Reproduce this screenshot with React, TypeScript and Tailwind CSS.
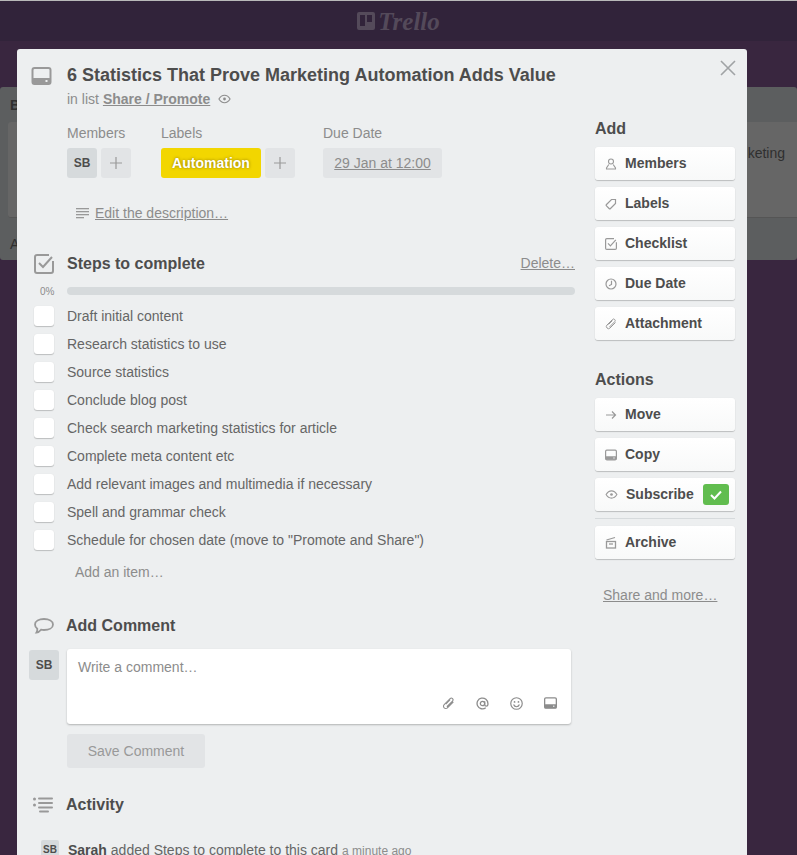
import React from 'react'

const ITEMS = [
  'Draft initial content',
  'Research statistics to use',
  'Source statistics',
  'Conclude blog post',
  'Check search marketing statistics for article',
  'Complete meta content etc',
  'Add relevant images and multimedia if necessary',
  'Spell and grammar check',
  'Schedule for chosen date (move to "Promote and Share")',
]

type IconProps = { className?: string }

const CardIcon = ({ className }: IconProps) => (
  <svg viewBox="0 0 20 18" className={className} fill="none">
    <rect x="1" y="1" width="18" height="16" rx="2" stroke="currentColor" strokeWidth="2" />
    <rect x="1" y="11" width="18" height="6" rx="1" fill="currentColor" />
    <rect x="14" y="13" width="2" height="2" fill="#edeff0" />
  </svg>
)

const EyeIcon = ({ className }: IconProps) => (
  <svg viewBox="0 0 14 10" className={className} fill="none" stroke="currentColor">
    <path d="M1 5c1.500-2.500 3.500-4 6-4s4.500 1.500 6 4c-1.500 2.500-3.500 4-6 4s-4.500-1.500-6-4z" strokeWidth="1.200" />
    <circle cx="7" cy="5" r="1.500" fill="currentColor" stroke="none" />
  </svg>
)

const CheckboxIcon = ({ className }: IconProps) => (
  <svg viewBox="0 0 20 20" className={className} fill="none" stroke="currentColor">
    <path d="M15 1H3a2 2 0 0 0-2 2v14a2 2 0 0 0 2 2h14a2 2 0 0 0 2-2V7" strokeWidth="2" />
    <path d="M5 9l4 4 9-10" strokeWidth="2" />
  </svg>
)

const PersonIcon = ({ className }: IconProps) => (
  <svg viewBox="0 0 12 12" className={className} fill="none" stroke="currentColor" strokeWidth="1.100">
    <circle cx="6" cy="3.500" r="2.500" />
    <path d="M3.800 6.500 1.500 10v1h9v-1L8.200 6.500" />
  </svg>
)

const TagIcon = ({ className }: IconProps) => (
  <svg viewBox="0 0 12 12" className={className} fill="none" stroke="currentColor" strokeWidth="1.200">
    <path d="M6.500 1.500h4v4L5.500 10.500a1 1 0 0 1-1.400 0L1.500 7.900a1 1 0 0 1 0-1.400z" />
  </svg>
)

const ClockIcon = ({ className }: IconProps) => (
  <svg viewBox="0 0 12 12" className={className} fill="none" stroke="currentColor" strokeWidth="1.200">
    <circle cx="6" cy="6" r="5" />
    <path d="M6.500 2.800V6.500L4 7.800" />
  </svg>
)

const ClipIcon = ({ className }: IconProps) => (
  <svg viewBox="0 0 12 12" className={className} fill="none" stroke="currentColor" strokeWidth="1">
    <path d="M10.500 4.500 5 10a2 2 0 0 1-3-3l5.500-5.500a1.500 1.500 0 0 1 2.200 2.200L4.500 9" />
    <path d="M3.500 6.500 7.500 2.500" />
  </svg>
)

const ArrowIcon = ({ className }: IconProps) => (
  <svg viewBox="0 0 12 12" className={className} fill="none" stroke="currentColor" strokeWidth="1.200">
    <path d="M1 6h9.500M7 2.500 10.500 6 7 9.500" />
  </svg>
)

const ArchiveIcon = ({ className }: IconProps) => (
  <svg viewBox="0 0 12 13" className={className} fill="none" stroke="currentColor">
    <path d="M1.500 4 10 1.500" strokeWidth="1.200" />
    <rect x="1.500" y="5.500" width="9" height="6.500" strokeWidth="1.300" />
    <path d="M4 8h4" strokeWidth="1.300" />
  </svg>
)

const LinesIcon = ({ className }: IconProps) => (
  <svg viewBox="0 0 13 11" className={className} fill="currentColor">
    <rect x="0" y="0" width="13" height="1.300" />
    <rect x="0" y="3" width="13" height="1.300" />
    <rect x="0" y="6" width="13" height="1.300" />
    <rect x="0" y="9" width="8" height="1.300" />
  </svg>
)

const BubbleIcon = ({ className }: IconProps) => (
  <svg viewBox="0 0 20 16" className={className} fill="none" stroke="currentColor" strokeWidth="1.800">
    <path d="M10 1c5 0 9 2 9 5.500S15 12 10 12c-1 0-2-.100-3-.300C6 13 4.500 14.500 2.500 14.500c.700-1 .900-2.300.800-3.700C2 9.800 1 8.300 1 6.500 1 3 5 1 10 1z" />
  </svg>
)

const ListIcon = ({ className }: IconProps) => (
  <svg viewBox="0 0 20 16" className={className} fill="currentColor">
    <circle cx="1.500" cy="2" r="1.500" />
    <circle cx="1.500" cy="8" r="1.500" />
    <rect x="5" y="0.500" width="15" height="2" rx="1" />
    <rect x="5" y="5" width="15" height="2" rx="1" />
    <rect x="5" y="9.500" width="15" height="2" rx="1" />
    <rect x="6" y="13.500" width="10" height="2" rx="1" />
  </svg>
)

const AtIcon = ({ className }: IconProps) => (
  <svg viewBox="0 0 12 12" className={className} fill="none" stroke="currentColor" strokeWidth="1.200">
    <circle cx="6" cy="6" r="2" />
    <path d="M8 4v3a1.500 1.500 0 0 0 3 0V6a5 5 0 1 0-2 4" />
  </svg>
)

const SmileIcon = ({ className }: IconProps) => (
  <svg viewBox="0 0 12 12" className={className} fill="none" stroke="currentColor" strokeWidth="1.100">
    <circle cx="6" cy="6" r="5.300" />
    <circle cx="4.200" cy="4.500" r=".8" fill="currentColor" stroke="none" />
    <circle cx="7.800" cy="4.500" r=".8" fill="currentColor" stroke="none" />
    <path d="M3.300 7c.5 1.300 1.500 2 2.700 2s2.200-.7 2.700-2" />
  </svg>
)

const SideButton = ({ icon, label }: { icon: React.ReactNode; label: string }) => (
  <div className="flex h-[33px] items-center rounded-[3px] bg-gradient-to-b from-white to-[#f8f9f9] pl-[10px] text-[14px] font-bold text-[#4d4d4d] shadow-[0_1px_1px_rgba(0,0,0,0.2),0_0_1px_rgba(0,0,0,0.1)]">
    <span className="flex w-[20px] text-[#999999]">{icon}</span>
    {label}
  </div>
)

const Avatar = () => (
  <div className="flex h-[30px] w-[30px] items-center justify-center rounded-[3px] bg-[#d6dadc] pb-[1px] text-[12px] font-bold text-[#4d4d4d]">
    SB
  </div>
)

const Plus = () => (
  <div className="flex h-[30px] w-[30px] items-center justify-center rounded-[3px] bg-[#e2e4e6] text-[#999999]">
    <svg viewBox="0 0 12 12" className="h-[12px] w-[12px]" stroke="currentColor" strokeWidth="1.200">
      <path d="M6 0v12M0 6h12" />
    </svg>
  </div>
)

export default function App() {
  return (
    <div className="relative h-[855px] w-[797px] overflow-hidden bg-[#39263f] font-['Liberation_Sans',Arial,sans-serif] text-[14px] text-[#4d4d4d]">
      {/* Header and the dimmed board */}
      <div className="h-px bg-[#b9b9b9]" />
      <div className="flex h-[40px] items-center justify-center gap-[3px] bg-[#31233a] text-[#544a5a]">
        <svg viewBox="0 0 18 18" className="h-[18px] w-[18px]" fill="currentColor">
          <path d="M2 0h14a2 2 0 0 1 2 2v14a2 2 0 0 1-2 2H2a2 2 0 0 1-2-2V2a2 2 0 0 1 2-2zm1 3v11h5V3zm7 0v7h5V3z" fillRule="evenodd" />
        </svg>
        <span className="font-['Liberation_Serif',serif] text-[25px] font-bold italic leading-none">Trello</span>
      </div>
      <div className="mt-[46px] flex h-[173px] flex-col rounded-[3px] bg-[#5c5e5f] pt-[8px] text-[#2f2f2f]">
        <div className="h-[27px] pl-[10px] text-[14px] font-bold">B</div>
        <div className="mx-[8px] mr-0 flex h-[96px] justify-end rounded-l-[3px] border-b border-[#555] bg-[#666666] pr-[12px] pt-[21px]">
          <span className="text-[14px]">keting</span>
        </div>
        <div className="pl-[10px] pt-[16px]">A</div>
      </div>

      {/* Card modal */}
      <div className="absolute left-[17px] top-[49px] flex h-[830px] w-[730px] rounded-t-[3px] bg-[#edeff0]">
        <svg viewBox="0 0 16 16" className="absolute right-[11px] top-[11px] h-[16px] w-[16px] text-[#a0a3a5]" stroke="currentColor" strokeWidth="1.600" fill="none">
          <path d="M1 1l14 14M15 1 1 15" />
        </svg>

        {/* Main column */}
        <div className="flex w-[558px] flex-col pt-[16px]">
          <div className="flex">
            <div className="w-[50px] pl-[14px] pt-[2px] text-[#999999]">
              <CardIcon className="h-[18px] w-[21px]" />
            </div>
            <div>
              <h1 className="text-[18px] font-bold leading-[20px]">6 Statistics That Prove Marketing Automation Adds Value</h1>
              <div className="mt-[4px] flex items-center leading-[20px] text-[#8c8c8c]">
                in list
                <span className="ml-[4px] font-bold underline">Share / Promote</span>
                <EyeIcon className="ml-[8px] h-[10px] w-[13px]" />
              </div>
            </div>
          </div>

          <div className="ml-[50px] mt-[14px] flex text-[#8c8c8c]">
            <div className="w-[94px]">
              <div className="leading-[20px]">Members</div>
              <div className="mt-[5px] flex gap-[4px]">
                <Avatar />
                <Plus />
              </div>
            </div>
            <div className="w-[162px]">
              <div className="leading-[20px]">Labels</div>
              <div className="mt-[5px] flex gap-[4px]">
                <div className="flex h-[30px] w-[100px] items-center justify-center rounded-[3px] bg-[#f2d600] font-bold text-white [text-shadow:0_0_3px_rgba(100,80,0,0.7)]">
                  Automation
                </div>
                <Plus />
              </div>
            </div>
            <div>
              <div className="leading-[20px]">Due Date</div>
              <div className="mt-[5px] flex h-[30px] w-[119px] items-center justify-center rounded-[3px] bg-[#e2e4e6] underline">
                29 Jan at 12:00
              </div>
            </div>
          </div>

          <div className="ml-[59px] mt-[25px] flex items-center leading-[20px] text-[#8c8c8c]">
            <LinesIcon className="h-[11px] w-[13px] text-[#999999]" />
            <span className="ml-[6px] underline">Edit the description…</span>
          </div>

          <div className="mt-[30px] flex items-center">
            <div className="w-[50px] pl-[17px] text-[#999999]">
              <CheckboxIcon className="h-[20px] w-[20px]" />
            </div>
            <h2 className="flex-1 text-[16px] font-bold leading-[20px]">Steps to complete</h2>
            <span className="text-[#8c8c8c] underline">Delete…</span>
          </div>

          <div className="mt-[13px] flex h-[8px] items-center">
            <div className="w-[50px] pl-[23px] text-[10px] text-[#8c8c8c]">0%</div>
            <div className="h-[8px] flex-1 rounded-[4px] bg-[#d6dadc]" />
          </div>

          <div className="mt-[7px] flex flex-col">
            {ITEMS.map((item) => (
              <div key={item} className="flex h-[28px] items-center text-[#666666]">
                <div className="w-[50px] pl-[17px]">
                  <div className="h-[20px] w-[20px] rounded-[3px] bg-white shadow-[0_1px_1px_rgba(0,0,0,0.2),0_0_1px_rgba(0,0,0,0.1)]" />
                </div>
                {item}
              </div>
            ))}
          </div>

          <div className="ml-[58px] mt-[8px] leading-[20px] text-[#8c8c8c]">Add an item…</div>

          <div className="mt-[34px] flex items-center">
            <div className="w-[49px] pl-[17px] text-[#999999]">
              <BubbleIcon className="h-[16px] w-[20px]" />
            </div>
            <h2 className="text-[16px] font-bold leading-[20px]">Add Comment</h2>
          </div>

          <div className="mt-[13px] flex">
            <div className="w-[50px] pl-[12px] pt-[1px]">
              <Avatar />
            </div>
            <div className="flex h-[75px] w-[504px] flex-col justify-between rounded-[3px] bg-white px-[11px] pb-[14px] pt-[8px] shadow-[0_1px_2px_rgba(0,0,0,0.25)]">
              <div className="leading-[20px] text-[#8c8c8c]">Write a comment…</div>
              <div className="flex justify-end gap-[21px] pr-[3px] text-[#8c8c8c]">
                <ClipIcon className="h-[13px] w-[13px]" />
                <AtIcon className="h-[13px] w-[13px]" />
                <SmileIcon className="h-[13px] w-[13px]" />
                <CardIcon className="h-[12px] w-[13px]" />
              </div>
            </div>
          </div>

          <div className="ml-[50px] mt-[10px] flex h-[34px] w-[138px] items-center justify-center rounded-[3px] bg-[#e2e4e6] text-[#999999]">
            Save Comment
          </div>

          <div className="mt-[27px] flex items-center">
            <div className="w-[49px] pl-[16px] text-[#999999]">
              <ListIcon className="h-[16px] w-[20px]" />
            </div>
            <h2 className="text-[16px] font-bold leading-[20px]">Activity</h2>
          </div>

          <div className="mt-[25px] flex items-start">
            <div className="w-[51px] pl-[24px]">
              <div className="flex h-[18px] w-[18px] items-center justify-center rounded-[2px] bg-[#d6dadc] text-[10px] font-bold">SB</div>
            </div>
            <div className="leading-[20px] text-[#666666]">
              <span className="font-bold text-[#4d4d4d]">Sarah</span> added Steps to complete to this card
              <span className="ml-[4px] text-[12px] text-[#8c8c8c]">a minute ago</span>
            </div>
          </div>
        </div>

        {/* Sidebar */}
        <div className="ml-[20px] flex w-[140px] flex-col pt-[70px]">
          <h3 className="text-[16px] font-bold leading-[20px]">Add</h3>
          <div className="mt-[8px] flex flex-col gap-[7px]">
            <SideButton icon={<PersonIcon className="h-[12px] w-[12px]" />} label="Members" />
            <SideButton icon={<TagIcon className="h-[12px] w-[12px]" />} label="Labels" />
            <SideButton icon={<CheckboxIcon className="h-[12px] w-[12px]" />} label="Checklist" />
            <SideButton icon={<ClockIcon className="h-[12px] w-[12px]" />} label="Due Date" />
            <SideButton icon={<ClipIcon className="h-[12px] w-[12px]" />} label="Attachment" />
          </div>

          <h3 className="mt-[30px] text-[16px] font-bold leading-[20px]">Actions</h3>
          <div className="mt-[8px] flex flex-col gap-[7px]">
            <SideButton icon={<ArrowIcon className="h-[12px] w-[12px]" />} label="Move" />
            <SideButton icon={<CardIcon className="h-[12px] w-[12px]" />} label="Copy" />
            <div className="flex h-[33px] items-center justify-between rounded-[3px] bg-gradient-to-b from-white to-[#f8f9f9] pl-[10px] pr-[6px] text-[14px] font-bold shadow-[0_1px_1px_rgba(0,0,0,0.2),0_0_1px_rgba(0,0,0,0.1)]">
              <span className="flex items-center">
                <EyeIcon className="mr-[8px] h-[9px] w-[13px] text-[#999999]" />
                Subscribe
              </span>
              <span className="flex h-[21px] w-[26px] items-center justify-center rounded-[3px] bg-[#61bd4f]">
                <svg viewBox="0 0 12 10" className="h-[10px] w-[12px]" fill="none" stroke="white" strokeWidth="2">
                  <path d="M1 5l3.500 3.500L11 1.500" />
                </svg>
              </span>
            </div>
          </div>
          <div className="my-[7px] h-px bg-[#d6dadc]" />
          <SideButton icon={<ArchiveIcon className="h-[13px] w-[12px]" />} label="Archive" />
          <div className="ml-[8px] mt-[26px] leading-[20px] text-[#8c8c8c] underline">Share and more…</div>
        </div>
      </div>
    </div>
  )
}
